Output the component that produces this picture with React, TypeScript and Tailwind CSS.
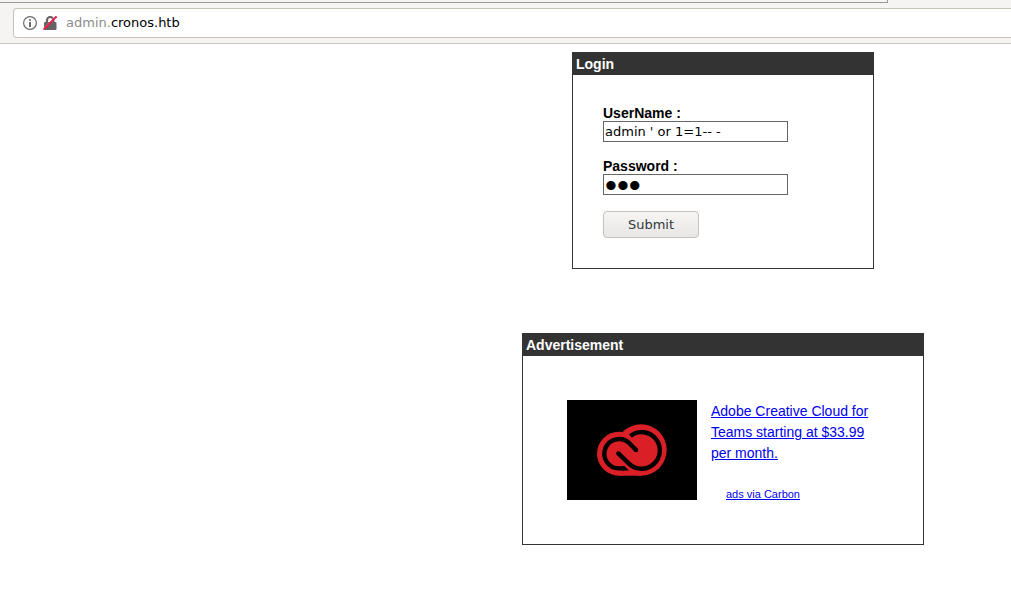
import type { ReactNode } from "react";

function InfoIcon() {
  return (
    <svg width="14" height="14" viewBox="0 0 14 14" fill="none" aria-hidden="true">
      <circle cx="7" cy="7" r="6.4" stroke="#6b6b6b" strokeWidth="1.2" />
      <circle cx="7" cy="4" r="1.1" fill="#6b6b6b" />
      <path d="M7 6v5" stroke="#6b6b6b" strokeWidth="2" />
    </svg>
  );
}

function InsecureLockIcon() {
  return (
    <svg width="14" height="14" viewBox="0 0 14 14" fill="none" aria-hidden="true">
      <path d="M4 7V4.2a3.2 3.2 0 0 1 6.4 0V7" stroke="#636363" strokeWidth="2.2" />
      <rect x="1" y="6" width="12.5" height="8" rx="1" fill="#636363" />
      <path d="M0 13 12.6 0" stroke="#fff" strokeWidth=".6" />
      <path d="M.5 13.6 13.5.4" stroke="#f0184c" strokeWidth="2" />
    </svg>
  );
}

function CreativeCloudArt() {
  return (
    <svg
      width="130"
      height="100"
      viewBox="0 0 130 100"
      role="img"
      aria-label="Creative Cloud"
      className="block bg-black"
    >
      <g fill="#da1f26">
        <circle cx="74" cy="50" r="25.7" />
        <circle cx="52" cy="53.7" r="22" />
        <path d="M52 60h22v15.7H52z" />
      </g>
      <g fill="none" stroke="#000" strokeWidth="4.4">
        <path d="M57.5 68.4H52A14.7 14.7 0 1 1 62.4 43.3L69 50" />
        <path d="M63.4 35.9A18.3 18.3 0 1 1 61 62.7L51.4 53.4" />
      </g>
      <circle cx="69" cy="50" r="2.2" />
      <circle cx="51.4" cy="53.4" r="2.2" />
      <path d="M55 66.2h2.5l4.5 4.4h-7z" />
    </svg>
  );
}

function Panel({ title, className, children }: { title: string; className: string; children: ReactNode }) {
  return (
    <section className={`border border-[#333333] ${className}`}>
      <h2 className="bg-[#333333] p-[3px] text-sm leading-4 font-bold text-white">{title}</h2>
      {children}
    </section>
  );
}

const fieldClass = "block h-[21px] w-[185px] border border-[#666666] bg-white px-px leading-4 text-black outline-none";

export default function App() {
  return (
    <div className="min-h-screen bg-white font-['Liberation_Sans',Arial,sans-serif] text-sm text-black">
      <header className="border-b border-[#c8c4bc] bg-[#f5f4f2]">
        <div className="mr-[123px] h-[3px] border-r border-b border-[#9a9894]" />
        <div className="pt-[5px] pb-[5px] pl-[13px]">
          <div className="flex h-[30px] items-center rounded-l border border-r-0 border-[#c8c4bc] bg-white pl-[9px]">
            <InfoIcon />
            <span className="ml-[6px]">
              <InsecureLockIcon />
            </span>
            <p className="ml-[9px] font-['DejaVu_Sans',sans-serif] text-[13px] leading-4 text-[#8c8c8c]">
              admin.<span className="text-black">cronos.htb</span>
            </p>
          </div>
        </div>
      </header>

      <main className="flex flex-col items-center pt-2 pb-11 pl-[435px]">
        <Panel title="Login" className="w-[302px]">
          <form className="p-[30px]" onSubmit={(event) => event.preventDefault()}>
            <label htmlFor="username" className="block leading-4 font-bold">
              UserName :
            </label>
            <input
              id="username"
              type="text"
              defaultValue="admin ' or 1=1-- -"
              className={`${fieldClass} font-['DejaVu_Sans',sans-serif] text-[13px]`}
            />
            <label htmlFor="password" className="mt-4 block leading-4 font-bold">
              Password :
            </label>
            <input
              id="password"
              type="password"
              defaultValue="abc"
              className={`${fieldClass} pt-0.5 font-['Liberation_Sans',sans-serif] text-[34px]`}
            />
            <button
              type="submit"
              className="mt-4 block h-[27px] w-24 rounded border border-[#c5c1bb] bg-linear-to-b from-[#f6f5f4] to-[#e9e7e5] font-['DejaVu_Sans',sans-serif] text-[13px] leading-4 text-[#33393b]"
            >
              Submit
            </button>
          </form>
        </Panel>

        <Panel title="Advertisement" className="mt-16 w-[402px]">
          <div className="flex gap-[14px] px-11 py-11">
            <a href="#creative-cloud" className="shrink-0">
              <CreativeCloudArt />
            </a>
            <div className="pt-px text-[#0000ee]">
              <a href="#creative-cloud" className="block leading-[21px] underline">
                Adobe Creative Cloud for
                <br />
                Teams starting at $33.99
                <br />
                per month.
              </a>
              <a href="#carbon" className="mt-6 ml-[15px] block text-[11px] leading-3 underline">
                ads via Carbon
              </a>
            </div>
          </div>
        </Panel>
      </main>
    </div>
  );
}
